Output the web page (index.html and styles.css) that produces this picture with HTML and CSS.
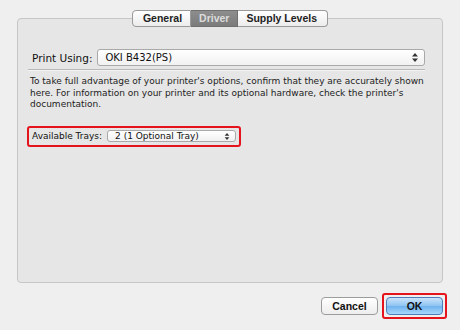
FILE: index.html
```html
<!DOCTYPE html>
<html lang="en">
<head>
    <meta charset="UTF-8">
    <title>Options &amp; Supplies</title>
    <link rel="stylesheet" href="styles.css">
</head>
<body>
<div class="dialog">
    <div class="tabs">
        <span class="tab">General</span>
        <span class="tab active">Driver</span>
        <span class="tab">Supply Levels</span>
    </div>
    <div class="panel">
        <div class="row main-row">
            <span class="label">Print Using:</span>
            <div class="popup wide">
                <span>OKI B432(PS)</span>
                <svg class="arrows" width="6" height="9" viewBox="0 0 6 9"><path d="M3 0L6 3.5H0Z M3 9L6 5.5H0Z" fill="#333"/></svg>
            </div>
        </div>
        <div class="sep"></div>
        <p class="info">To take full advantage of your printer's options, confirm that they are accurately shown here. For information on your printer and its optional hardware, check the printer's documentation.</p>
        <div class="highlight trays">
            <span class="label small">Available Trays:</span>
            <div class="popup narrow">
                <span>2 (1 Optional Tray)</span>
                <svg class="arrows" width="6" height="9" viewBox="0 0 6 9"><path d="M3 0L6 3.5H0Z M3 9L6 5.5H0Z" fill="#333"/></svg>
            </div>
        </div>
    </div>
    <div class="footer">
        <span class="btn">Cancel</span>
        <span class="highlight ok-wrap"><span class="btn ok">OK</span></span>
    </div>
</div>
</body>
</html>
```
FILE: styles.css
```css
*{
    margin: 0;
    padding: 0;
    box-sizing: border-box;
}
body{
    background: #efefef;
    font-family: "DejaVu Sans", "Liberation Sans", sans-serif;
    color: #111;
}
.dialog{
    width: 460px;
    height: 330px;
    padding: 10px 17px 0 17px;
}
.tabs{
    display: flex;
    justify-content: center;
    position: relative;
    z-index: 1;
    margin-bottom: -9px;
}
.tab{
    height: 17px;
    line-height: 15px;
    font-family: "Liberation Sans", sans-serif;
    font-size: 10.5px;
    font-weight: bold;
    padding: 0 8px;
    border: 1px solid #9a9a9a;
    border-left: none;
    background: linear-gradient(#ffffff, #ececec);
    color: #222;
}
.tab:first-child{
    border-left: 1px solid #9a9a9a;
    border-radius: 4px 0 0 4px;
    padding-left: 10px;
}
.tab:last-child{
    border-radius: 0 4px 4px 0;
    padding-right: 10px;
}
.tab.active{
    background: linear-gradient(#8d8d8d, #7b7b7b);
    border-color: #6f6f6f;
    color: #dcdcdc;
}
.panel{
    height: 265px;
    background: #e6e6e6;
    border: 1px solid #c6c6c6;
    border-radius: 4px;
    padding: 30px 17px 0 10px;
}
.row{
    display: flex;
    align-items: center;
}
.main-row{
    padding-left: 4px;
}
.label{
    font-size: 10.5px;
    margin-right: 5px;
}
.label.small{
    font-size: 9px;
}
.popup{
    display: flex;
    align-items: center;
    justify-content: space-between;
    background: linear-gradient(#ffffff, #f1f1f1);
    border: 1px solid #a9a9a9;
    border-radius: 3px;
}
.popup.wide{
    flex: 1;
    height: 17px;
    font-size: 10px;
    padding: 0 6px 0 7px;
}
.popup.narrow{
    width: 129px;
    height: 12px;
    font-size: 9px;
    padding: 0 5px 0 7px;
}
.arrows{
    display: block;
}
.popup.narrow .arrows{
    height: 7px;
}
.sep{
    background: #b8b8b8;
    border-bottom: 1px solid #f4f4f4;
    margin: 3px 0 5px 0;
    height: 2px;
}
.info{
    font-size: 9px;
    line-height: 11.5px;
    color: #222;
    padding-left: 2px;
    margin-right: -8px;
}
.highlight{
    border: 2px solid #e5141c;
    border-radius: 3px;
}
.trays{
    display: inline-flex;
    align-items: center;
    margin: 15px 0 0 -1px;
    height: 21px;
    padding: 0 3px 0 3px;
}
.footer{
    display: flex;
    justify-content: flex-end;
    align-items: center;
    gap: 7px;
    margin-top: 10px;
    margin-right: -4px;
}
.btn{
    display: block;
    width: 57px;
    height: 18px;
    line-height: 16px;
    text-align: center;
    font-family: "Liberation Sans", sans-serif;
    font-size: 10.5px;
    font-weight: bold;
    border: 1px solid #9c9c9c;
    border-radius: 4px;
    background: linear-gradient(#ffffff, #ededed);
}
.ok-wrap{
    display: block;
    padding: 2px;
    margin-left: -3px;
}
.btn.ok{
    border-color: #4d7cb6;
    background: linear-gradient(#cbe4fa, #8ec4f2 50%, #6eb2ee 51%, #a6d6fb);
}
```
